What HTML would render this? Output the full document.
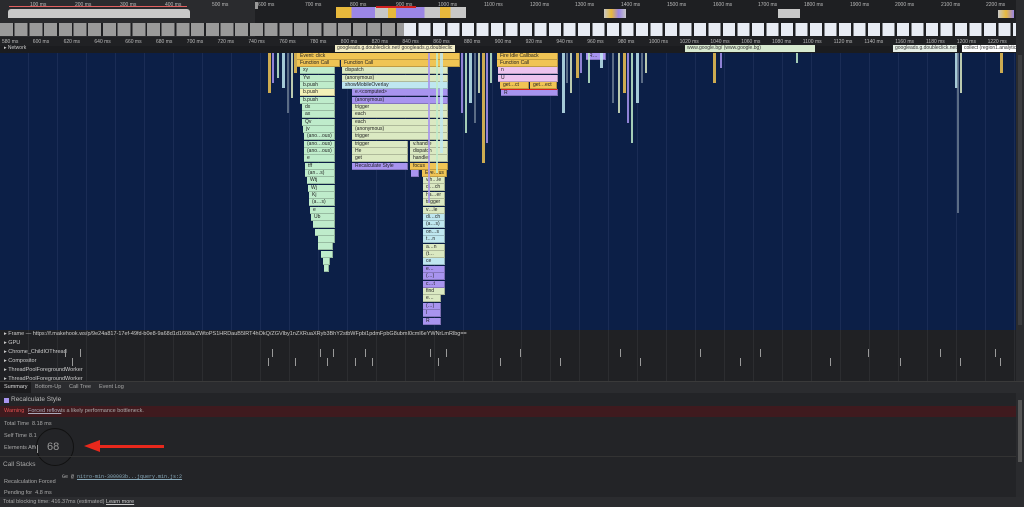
<!DOCTYPE html><html><head><meta charset="utf-8"><style>
*{margin:0;padding:0;box-sizing:border-box}
body{width:1024px;height:507px;overflow:hidden;background:#202124;font-family:"Liberation Sans",sans-serif;position:relative;color:#c8c8c8}
.a{position:absolute}
.t{position:absolute;font-size:5px;color:#bbb;white-space:nowrap}
.b{position:absolute;height:7px;font-size:5px;line-height:7px;color:#222;padding-left:3px;overflow:hidden;white-space:nowrap;border-right:1px solid rgba(0,0,0,.25);border-bottom:1px solid rgba(0,0,0,.2)}
.y{background:#f0c454}.g{background:#bfeccb}.p{background:#a894ef}.k{background:#ecc3ee}.l{background:#bfe7f0}.w{background:#dbe9c2}.e{background:#f4f1b8}
.v{position:absolute;width:2px;background:#6a7a90}
.tr{position:absolute;left:4px;font-size:5.5px;color:#ccc;white-space:nowrap}
.s{position:absolute;font-size:5.5px;color:#aaa;white-space:nowrap}
</style></head><body>
<!-- overview -->
<div class="a" style="left:0;top:0;width:1024px;height:37px;background:#1e1f22"></div>
<div class="a" style="left:0;top:0;width:255px;height:37px;background:#2a2b2e"></div>
<div class="t" style="left:30px;top:2px">100 ms</div><div class="t" style="left:75px;top:2px">200 ms</div><div class="t" style="left:120px;top:2px">300 ms</div><div class="t" style="left:165px;top:2px">400 ms</div><div class="t" style="left:212px;top:2px">500 ms</div><div class="t" style="left:258px;top:2px">600 ms</div><div class="t" style="left:305px;top:2px">700 ms</div><div class="t" style="left:350px;top:2px">800 ms</div><div class="t" style="left:396px;top:2px">900 ms</div><div class="t" style="left:438px;top:2px">1000 ms</div><div class="t" style="left:484px;top:2px">1100 ms</div><div class="t" style="left:530px;top:2px">1200 ms</div><div class="t" style="left:575px;top:2px">1300 ms</div><div class="t" style="left:621px;top:2px">1400 ms</div><div class="t" style="left:667px;top:2px">1500 ms</div><div class="t" style="left:713px;top:2px">1600 ms</div><div class="t" style="left:758px;top:2px">1700 ms</div><div class="t" style="left:804px;top:2px">1800 ms</div><div class="t" style="left:850px;top:2px">1900 ms</div><div class="t" style="left:895px;top:2px">2000 ms</div><div class="t" style="left:941px;top:2px">2100 ms</div><div class="t" style="left:986px;top:2px">2200 ms</div>
<div class="a" style="left:9px;top:6px;width:178px;height:1px;background:#e06060"></div>
<div class="a" style="left:8px;top:9px;width:182px;height:9px;background:#c8c8c8;border-radius:3px 3px 0 0"></div>
<div class="a" style="left:255px;top:2px;width:3px;height:7px;background:#999"></div>
<div class="a" style="left:336px;top:7px;width:130px;height:11px;background:linear-gradient(90deg,#e8b93c 0 12%,#9b86e6 12% 30%,#c8c8c8 30% 40%,#e8b93c 40% 46%,#9b86e6 46% 68%,#c8c8c8 68% 80%,#e8b93c 80% 88%,#c8c8c8 88%)"></div>
<div class="a" style="left:376px;top:6px;width:40px;height:2px;background:#d02020"></div>
<div class="a" style="left:604px;top:9px;width:22px;height:9px;background:linear-gradient(90deg,#c8c8c8,#e8b93c,#9b86e6,#c8c8c8)"></div>
<div class="a" style="left:778px;top:9px;width:22px;height:9px;background:#c8c8c8"></div>
<div class="a" style="left:998px;top:10px;width:16px;height:8px;background:linear-gradient(90deg,#c8c8c8,#e8b93c,#9b86e6)"></div>
<div class="a" style="left:0;top:23px;width:1016px;height:13px;background:repeating-linear-gradient(90deg,#9a9a9a 0 13px,#1e1f22 13px 14.7px)"></div>
<div class="a" style="left:404px;top:23px;width:612px;height:13px;background:repeating-linear-gradient(90deg,#e8ecf4 0 12px,#1e1f22 12px 14.5px)"></div>
<div class="a" style="left:1016px;top:0;width:8px;height:37px;background:#2a2b2e"></div>
<!-- ruler -->
<div class="a" style="left:0;top:37px;width:1024px;height:10px;background:#202124"></div>
<div id="ruler"></div>
<div class="a" style="left:0;top:46px;width:1016px;height:7px;background:#1b1c1f"></div>
<div class="tr" style="top:45px;font-size:5px">▸ Network</div>
<div class="a" style="left:335px;top:45px;width:120px;height:7px;background:#f3eec8;font-size:5px;color:#333;padding-left:2px;white-space:nowrap;overflow:hidden">googleads.g.doubleclick.net/ googleads.g.doubleclic</div>
<div class="a" style="left:685px;top:45px;width:130px;height:7px;background:#d8ead0;font-size:5px;color:#333;padding-left:2px">www.google.bg/ (www.google.bg)</div>
<div class="a" style="left:893px;top:45px;width:64px;height:7px;background:#e6efe6;font-size:5px;color:#333;padding-left:2px;overflow:hidden;white-space:nowrap">googleads.g.doubleclick.net</div>
<div class="a" style="left:962px;top:45px;width:54px;height:7px;background:#fff;font-size:5px;color:#333;padding-left:2px;overflow:hidden;white-space:nowrap">collect (region1.analytics</div>
<!-- flame -->
<div class="a" style="left:0;top:53px;width:1016px;height:277px;background:#0c1f47;background-image:repeating-linear-gradient(90deg,transparent 0 28px,#1a2c55 28px 29px)"></div>
<div class="a" style="left:1016px;top:37px;width:8px;height:293px;background:#2a2b2e"></div>
<div class="a" style="left:1018px;top:55px;width:4px;height:270px;background:#3c3d40"></div>

<div class="b y" style="left:297px;top:53px;width:163px">Event: click</div>
<div class="b y" style="left:297px;top:60px;width:43px">Function Call</div>
<div class="b y" style="left:341px;top:60px;width:119px">Function Call</div>
<div class="b g" style="left:300px;top:67px;width:35px">xy</div>
<div class="b g" style="left:300px;top:75px;width:35px">Yw</div>
<div class="b g" style="left:300px;top:82px;width:35px">b.push</div>
<div class="b e" style="left:300px;top:89px;width:35px">b.push</div>
<div class="b g" style="left:300px;top:97px;width:35px">b.push</div>
<div class="b g" style="left:302px;top:104px;width:33px">dx</div>
<div class="b g" style="left:302px;top:111px;width:33px">ax</div>
<div class="b g" style="left:302px;top:119px;width:33px">Qv</div>
<div class="b g" style="left:303px;top:126px;width:32px">jv</div>
<div class="b g" style="left:304px;top:133px;width:31px">(ano…ous)</div>
<div class="b g" style="left:304px;top:141px;width:31px">(ano…ous)</div>
<div class="b g" style="left:304px;top:148px;width:31px">(ano…ous)</div>
<div class="b g" style="left:304px;top:155px;width:31px">e</div>
<div class="b g" style="left:305px;top:163px;width:30px">tff</div>
<div class="b g" style="left:305px;top:170px;width:30px">(an…s)</div>
<div class="b g" style="left:307px;top:177px;width:28px">Wtj</div>
<div class="b g" style="left:308px;top:185px;width:27px">Wj</div>
<div class="b g" style="left:309px;top:192px;width:26px">Kj</div>
<div class="b g" style="left:309px;top:199px;width:26px">(a…s)</div>
<div class="b g" style="left:310px;top:207px;width:25px">e</div>
<div class="b g" style="left:311px;top:214px;width:24px">Ub</div>
<div class="b g" style="left:313px;top:221px;width:22px"></div>
<div class="b g" style="left:315px;top:229px;width:20px"></div>
<div class="b g" style="left:318px;top:236px;width:17px"></div>
<div class="b g" style="left:318px;top:243px;width:15px"></div>
<div class="b g" style="left:321px;top:251px;width:12px"></div>
<div class="b g" style="left:323px;top:258px;width:7px"></div>
<div class="b g" style="left:324px;top:265px;width:5px"></div>

<div class="b w" style="left:342px;top:67px;width:106px">dispatch</div>
<div class="b w" style="left:342px;top:75px;width:106px">(anonymous)</div>
<div class="b l" style="left:342px;top:82px;width:106px">showMobileOverlay</div>
<div class="b p" style="left:352px;top:89px;width:96px">e.&lt;computed&gt;</div>
<div class="b p" style="left:352px;top:97px;width:96px">(anonymous)</div>
<div class="b w" style="left:352px;top:104px;width:96px">trigger</div>
<div class="b w" style="left:352px;top:111px;width:96px">each</div>
<div class="b w" style="left:352px;top:119px;width:96px">each</div>
<div class="b w" style="left:352px;top:126px;width:96px">(anonymous)</div>
<div class="b w" style="left:352px;top:133px;width:96px">trigger</div>
<div class="b w" style="left:352px;top:141px;width:56px">trigger</div><div class="b w" style="left:410px;top:141px;width:38px">v.handle</div>
<div class="b w" style="left:352px;top:148px;width:56px">He</div><div class="b w" style="left:410px;top:148px;width:38px">dispatch</div>
<div class="b w" style="left:352px;top:155px;width:56px">get</div><div class="b w" style="left:410px;top:155px;width:38px">handler</div>
<div class="b p" style="left:352px;top:163px;width:56px">Recalculate Style</div><div class="b y" style="left:410px;top:163px;width:38px">focus</div>
<div class="b p" style="left:411px;top:170px;width:8px"></div><div class="b y" style="left:422px;top:170px;width:25px">Eve…us</div>
<div id="rc"></div>

<div class="b y" style="left:497px;top:53px;width:61px">Fire Idle Callback</div>
<div class="b y" style="left:497px;top:60px;width:61px">Function Call</div>
<div class="b k" style="left:498px;top:67px;width:60px">n</div>
<div class="b k" style="left:498px;top:75px;width:60px">U</div>
<div class="b y" style="left:500px;top:82px;width:29px">get…ct</div><div class="b y" style="left:530px;top:82px;width:27px">get…ect</div>
<div class="b p" style="left:501px;top:89px;width:57px;border-top:1px solid #d22">R</div>
<div class="b p" style="left:586px;top:53px;width:20px">R…</div>
<div id="sl"></div>

<!-- tracks -->
<div class="a" style="left:0;top:330px;width:1016px;height:51px;background:#202124;background-image:repeating-linear-gradient(90deg,transparent 0 28px,#2c2d30 28px 29px)"></div>
<div class="a" style="left:1016px;top:330px;width:8px;height:51px;background:#2a2b2e"></div>
<div class="tr" style="top:331px">▸ Frame — https://f.makehook.ws/p/9e24a817-17ef-49fd-b0e8-9a68d1d1608a/ZWtoPS1HRDauB5lRT4hOkQ/ZGVlby1nZXRuaXRyb3BhY2stbWFpbi1pdmFpbG8ubmI0cml6eYWNrLmRlbg==</div>
<div class="tr" style="top:340px">▸ GPU</div>
<div class="tr" style="top:349px">▸ Chrome_ChildIOThread</div>
<div class="tr" style="top:358px">▸ Compositor</div>
<div class="tr" style="top:367px">▸ ThreadPoolForegroundWorker</div>
<div class="tr" style="top:376px">▸ ThreadPoolForegroundWorker</div>
<div id="tk"></div>
<!-- tabs -->
<div class="a" style="left:0;top:381px;width:1024px;height:12px;background:#2b2c2f;border-top:1px solid #3a3a3a"></div>
<div class="a" style="left:0;top:382px;width:31px;height:11px;background:#1b1b1d"></div>
<div class="s" style="left:4px;top:384px;color:#ddd">Summary</div>
<div class="s" style="left:35px;top:384px">Bottom-Up</div>
<div class="s" style="left:69px;top:384px">Call Tree</div>
<div class="s" style="left:99px;top:384px">Event Log</div>
<div class="a" style="left:0;top:393px;width:1016px;height:104px;background:#232427"></div>
<div class="a" style="left:1016px;top:393px;width:8px;height:104px;background:#2a2b2e"></div>
<div class="a" style="left:1018px;top:400px;width:4px;height:62px;background:#555"></div>
<div class="a" style="left:4px;top:398px;width:5px;height:5px;background:#a894ef"></div>
<div class="s" style="left:11px;top:396px;font-size:6.5px;color:#bbb">Recalculate Style</div>
<div class="a" style="left:0;top:406px;width:1016px;height:11px;background:#3f1a1e"></div>
<div class="s" style="left:4px;top:408px;color:#e05050">Warning</div>
<div class="s" style="left:28px;top:408px;color:#aab;text-decoration:underline">Forced reflow</div>
<div class="s" style="left:61px;top:408px">is a likely performance bottleneck.</div>
<div class="s" style="left:4px;top:421px">Total Time</div><div class="s" style="left:32px;top:421px">8.18 ms</div>
<div class="s" style="left:4px;top:433px">Self Time</div><div class="s" style="left:29px;top:433px">8.1</div>
<div class="s" style="left:4px;top:445px">Elements Affe</div>
<div class="a" style="left:36px;top:428px;width:38px;height:38px;border:1px solid #111;border-radius:50%;background:#232427"></div>
<div class="a" style="left:37px;top:445px;width:1px;height:8px;background:#999"></div>
<div class="s" style="left:47px;top:441px;font-size:11px;color:#999">68</div>
<div class="a" style="left:98px;top:445px;width:66px;height:3px;background:#e8281c"></div>
<div class="a" style="left:84px;top:440px;width:0;height:0;border-top:6.5px solid transparent;border-bottom:6.5px solid transparent;border-right:16px solid #e8281c"></div>
<div class="a" style="left:0;top:456px;width:1016px;height:1px;background:#333"></div>
<div class="s" style="left:3px;top:461px;font-size:6.5px;color:#aaa">Call Stacks</div>
<div class="s" style="left:62px;top:474px;font-family:'Liberation Mono',monospace;font-size:5px">Ge @ <span style="color:#8ab;text-decoration:underline">nitro-min-300003b...jquery.min.js:2</span></div>
<div class="s" style="left:4px;top:479px">Recalculation Forced</div>
<div class="s" style="left:4px;top:490px">Pending for&nbsp;&nbsp;4.8 ms</div>
<div class="a" style="left:0;top:497px;width:1024px;height:10px;background:#2b2c2f"></div>
<div class="s" style="left:3px;top:499px">Total blocking time: 416.37ms (estimated) <span style="color:#ccc;text-decoration:underline">Learn more</span></div>
<script>
var h='';for(var i=0;i<33;i++){h+='<div class="t" style="left:'+(2+i*30.8)+'px;top:39px">'+(580+i*20)+' ms</div>';}
document.getElementById('ruler').outerHTML=h;
var c=['w','w','w','w','w','l','l','l','l','w','w','l','p','p','p','w','w','p','p','p'],r='';
var nm=['v.h…le','di…ch','ha…er','trigger','v…le','di…ch','(a…s)','on…s','t…n','a…n','(t…','ce','e…','(…)','c…t','find','e…','(…)','l','R'];
for(var i=0;i<20;i++){r+='<div class="b '+c[i]+'" style="left:423px;top:'+(177+i*7.4)+'px;width:'+(i>15?18:22)+'px">'+nm[i]+'</div>';}
document.getElementById('rc').outerHTML=r;
var s='',cols=['#f0c454','#a894ef','#bfeccb','#bfe7f0','#6a7a90','#dbe9c2'];
var xs=[[268,40],[272,30],[277,25],[282,35],[287,60],[291,45],[294,20],[461,60],[465,80],[469,50],[474,70],[478,40],[482,110],[486,90],[490,30],[562,60],[566,30],[570,40],[576,25],[580,20],[588,30],[600,15],[612,50],[618,60],[623,40],[627,70],[631,90],[636,50],[641,30],[645,20],[713,30],[720,15],[796,10],[955,35],[957,160],[960,40],[1000,20],[428,150],[436,120],[440,100]];
xs.forEach(function(a,i){s+='<div class="a" style="left:'+a[0]+'px;top:53px;width:'+(i%3?2:3)+'px;height:'+a[1]+'px;background:'+cols[i%6]+';opacity:.85"></div>';});
document.getElementById('sl').outerHTML=s;
var k='',tx=[65,72,80,268,272,295,320,327,333,355,365,372,430,438,446,500,520,560,620,640,700,740,760,830,868,900,940,960,995,1000];
tx.forEach(function(x,i){k+='<div class="a" style="left:'+x+'px;top:'+(i%2?358:349)+'px;width:1px;height:8px;background:#9a9a9a"></div>';});
document.getElementById('tk').outerHTML=k;
</script>
</body></html>
